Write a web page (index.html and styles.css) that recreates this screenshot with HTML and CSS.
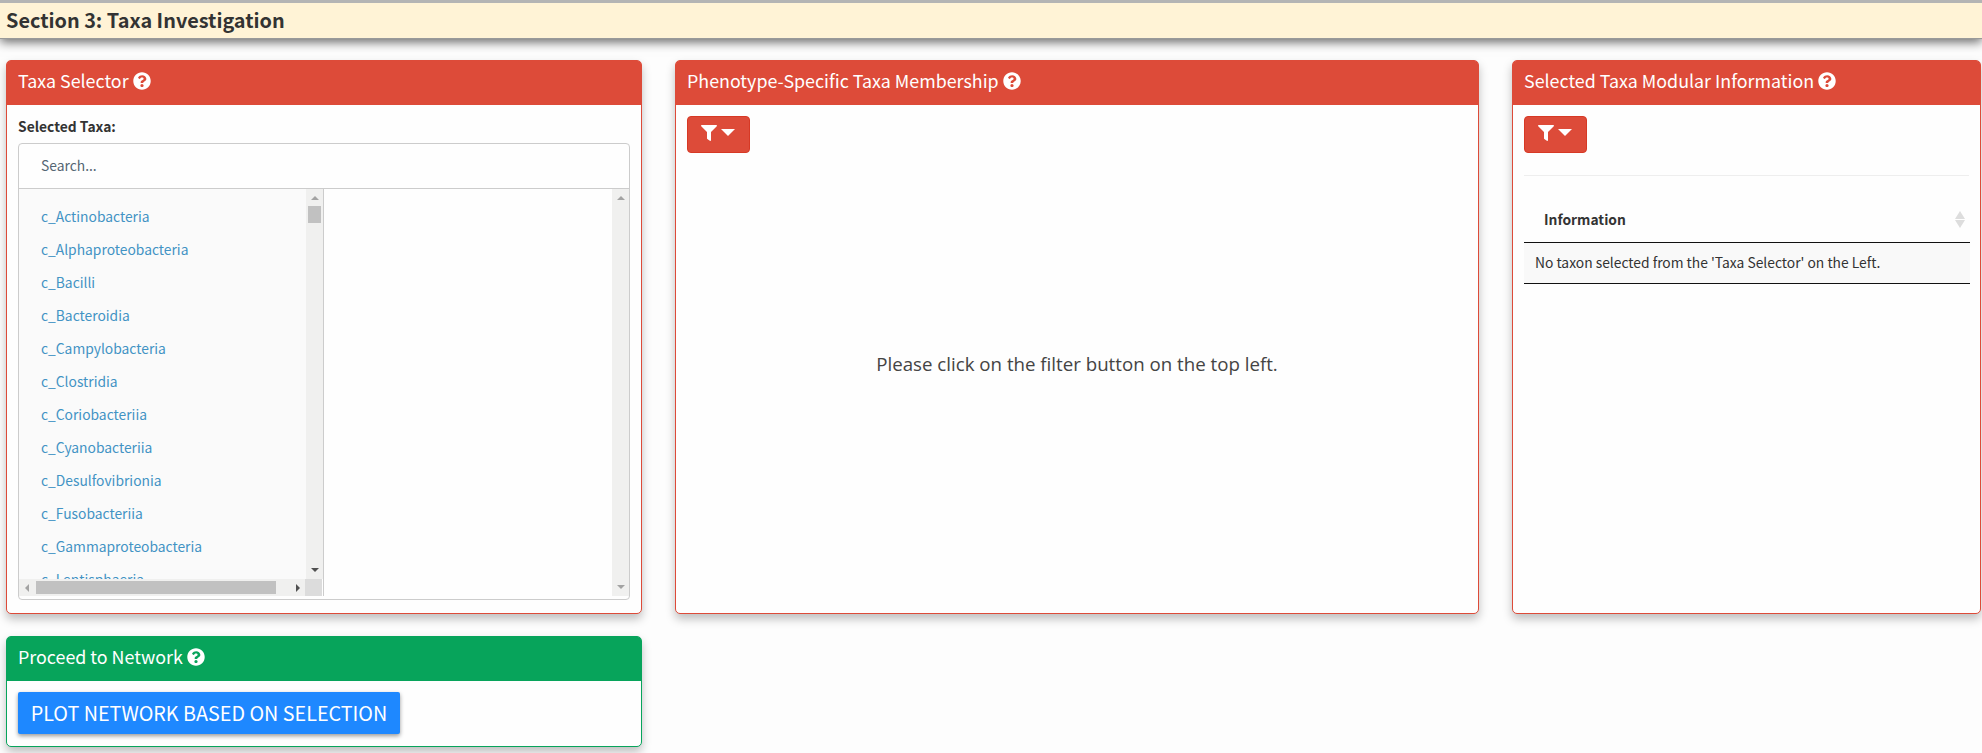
FILE: index.html
```html
<!DOCTYPE html>
<html lang="en">
<head>
<meta charset="utf-8">
<title>Taxa Investigation</title>
<link rel="stylesheet" href="styles.css">
</head>
<body>
<svg class="defs" aria-hidden="true">
  <symbol id="help" viewBox="0 0 512 512"><path d="M504 256c0 137-111 248-248 248S8 393 8 256 119 8 256 8s248 111 248 248zM262.700 90c-54.500 0-89.300 23-116.500 63.800-3.500 5.300-2.400 12.400 2.700 16.300l34.700 26.300c5.200 3.900 12.600 3 16.700-2.100 17.900-22.700 30.100-35.800 57.300-35.800 20.400 0 45.700 13.100 45.700 33 0 15-12.400 22.700-32.500 34C247.100 238.500 216 255 216 296v4c0 6.600 5.400 12 12 12h56c6.600 0 12-5.400 12-12v-1.300c0-28.600 83.800-29.800 83.800-107.200C379.800 133 319.200 90 262.700 90zM256 338c-25.400 0-46 20.600-46 46s20.600 46 46 46 46-20.600 46-46-20.600-46-46-46z"/></symbol>
  <symbol id="filter" viewBox="0 0 512 512"><path d="M488 0H24C2.700 0-8 25.900 7.100 41L192 225.900V432c0 7.800 3.800 15.200 10.200 19.700l80 56C298 518.700 320 507.500 320 488V225.900L504.900 41C520 25.900 509.300 0 488 0z"/></symbol>
</svg>
<header class="banner"><h1>Section 3: Taxa Investigation</h1></header>
<main class="columns">
  <div class="col">
    <section class="card card-main">
      <h2 class="card-head">Taxa Selector<svg class="help"><use href="#help"/></svg></h2>
      <div class="card-body">
        <div class="label">Selected Taxa:</div>
        <div class="picker">
          <div class="search">Search...</div>
          <div class="panes">
            <div class="pane-left">
              <div class="pane-row">
                <ul class="taxa">
                  <li>c_Actinobacteria</li><li>c_Alphaproteobacteria</li><li>c_Bacilli</li><li>c_Bacteroidia</li><li>c_Campylobacteria</li><li>c_Clostridia</li><li>c_Coriobacteriia</li><li>c_Cyanobacteriia</li><li>c_Desulfovibrionia</li><li>c_Fusobacteriia</li><li>c_Gammaproteobacteria</li><li>c_Lentisphaeria</li>
                </ul>
                <div class="vbar"><i class="up"></i><b class="vthumb"></b><i class="down active"></i></div>
              </div>
              <div class="hbar"><i class="left"></i><b class="hthumb"></b><i class="right active"></i><span class="corner"></span></div>
            </div>
            <div class="pane-right"><div class="vbar"><i class="up"></i><i class="down"></i></div></div>
          </div>
        </div>
      </div>
    </section>
    <section class="card card-green">
      <h2 class="card-head">Proceed to Network<svg class="help"><use href="#help"/></svg></h2>
      <div class="card-body"><button class="plot">PLOT NETWORK BASED ON SELECTION</button></div>
    </section>
  </div>
  <section class="card card-main">
    <h2 class="card-head">Phenotype-Specific Taxa Membership<svg class="help"><use href="#help"/></svg></h2>
    <div class="card-body">
      <button class="filter"><svg class="funnel"><use href="#filter"/></svg><span class="caret"></span></button>
      <p class="message">Please click on the filter button on the top left.</p>
    </div>
  </section>
  <section class="card card-main">
    <h2 class="card-head">Selected Taxa Modular Information<svg class="help"><use href="#help"/></svg></h2>
    <div class="card-body">
      <button class="filter"><svg class="funnel"><use href="#filter"/></svg><span class="caret"></span></button>
      <hr class="rule">
      <div class="table">
        <div class="thead"><span class="th">Information</span><svg class="sort" viewBox="0 0 10 18"><path d="M5 0L10 8H0zM0 9H10L5 17z"/></svg></div>
        <div class="td"><span class="cell">No taxon selected from the 'Taxa Selector' on the Left.</span></div>
      </div>
    </div>
  </section>
</main>
</body>
</html>
```
FILE: styles.css
```css
* { box-sizing: border-box; }
body { margin: 0; height: 753px; overflow: hidden; background: #fdfdfd; color: #333; font: 13.83px/20px "Noto Sans CJK SC", "Open Sans", sans-serif; }
.defs { display: none; }
h1, h2, p, ul { margin: 0; padding: 0; font-weight: 400; }
button { font-family: inherit; cursor: pointer; }
.banner { height: 39px; border-top: 3px solid #b4b4b4; border-bottom: 1px solid #999; background: #fff3d6; box-shadow: 0 3px 10px rgba(0,0,0,.6); padding-left: 6px; }
h1 { font-size: 19.85px; line-height: 33px; font-weight: 700; white-space: nowrap; }
.columns { display: grid; grid-template-columns: 636px 804px 469px; column-gap: 33px; padding: 21px 0 0 6px; align-items: start; }
.col { display: flex; flex-direction: column; gap: 22px; }
.card { border: 1px solid #dd4b39; border-radius: 5px; background: #fefefe; box-shadow: 0 5px 10px rgba(0,0,0,.25); }
.card-main { height: 554px; }
.card-green { height: 111px; border-color: #07a45b; }
.card-head { height: 44px; display: flex; align-items: center; gap: 4px; padding: 0 11px 6px; background: #dd4b39; color: #fff; font-size: 17.85px; border-radius: 3px 3px 0 0; white-space: nowrap; }
.card-green .card-head { background: #07a45b; }
.help { width: 18px; height: 18px; fill: #fff; margin-top: 2px; }
.card-body { padding: 11px; }
.label { font-weight: 700; line-height: 21px; height: 27px; }
.picker { width: 612px; height: 457px; border: 1px solid #ccc; border-radius: 4px; display: flex; flex-direction: column; }
.search { height: 45px; border-bottom: 1px solid #ccc; padding-left: 22px; line-height: 43px; color: #556673; }
.panes { height: 407px; display: flex; }
.pane-left { width: 305px; border-right: 1px solid #ccc; }
.pane-row { height: 390px; display: flex; background: #fafafa; overflow: hidden; }
.taxa { width: 287px; list-style: none; padding: 11px 0 0 22px; color: #4293c4; }
.taxa li { height: 33px; line-height: 33px; }
.vbar { width: 17px; background: #f0f0ef; display: flex; flex-direction: column; align-items: center; padding: 7px 0; }
.vbar .down { margin-top: auto; }
.up, .down, .left, .right { width: 0; height: 0; color: #a3a3a3; flex: none; }
.vbar .active, .hbar .active { color: #505050; }
.up { border: solid transparent; border-width: 0 4px 4px; border-bottom-color: currentColor; }
.down { border: solid transparent; border-width: 4px 4px 0; border-top-color: currentColor; }
.left { border: solid transparent; border-width: 4px 4px 4px 0; border-right-color: currentColor; }
.right { border: solid transparent; border-width: 4px 0 4px 4px; border-left-color: currentColor; }
.vthumb { width: 13px; height: 17px; background: #c1c1c1; margin-top: 6px; }
.hbar { height: 17px; width: 303px; background: #f0f0ef; display: flex; align-items: center; padding-left: 6px; }
.hthumb { width: 240px; height: 13px; background: #c1c1c1; margin: 0 20px 0 7px; }
.corner { width: 17px; height: 17px; background: #dcdcdc; margin-left: auto; }
.pane-right { flex: 1; display: flex; justify-content: flex-end; }
.plot { display: block; height: 42px; width: 382px; border: 0; border-radius: 2px; background: #1e88ff; color: #fff; font-size: 19.75px; line-height: 42px; padding: 0; box-shadow: 0 2px 4px rgba(0,0,0,.4); white-space: nowrap; }
.filter { width: 63px; height: 37px; display: flex; padding: 8px 0 0 13px; gap: 3px; border: 1px solid #d73925; border-radius: 4px; background: #dd4b39; }
.funnel { width: 16px; height: 16px; fill: #fff; }
.caret { border: solid transparent; border-width: 7px 7px 0; border-top-color: #fff; margin: 4px 0 0 1px; }
.message { font: 18.7px/28px "Open Sans", sans-serif; color: #444; text-align: center; margin-top: 197px; }
.rule { border: 0; height: 1px; background: #eee; margin: 22px 0 0; }
.table { margin-right: -1px; }
.thead { height: 67px; border-bottom: 1px solid #111; display: flex; justify-content: space-between; align-items: center; padding: 20px 5px 0 20px; font-weight: 700; }
.th { margin-top: -1px; }
.sort { width: 10px; height: 18px; fill: #ddd; margin-top: 2px; }
.td { height: 41px; background: #f9f9f9; border-bottom: 1px solid #111; padding-left: 11px; line-height: 39px; white-space: nowrap; }
```
